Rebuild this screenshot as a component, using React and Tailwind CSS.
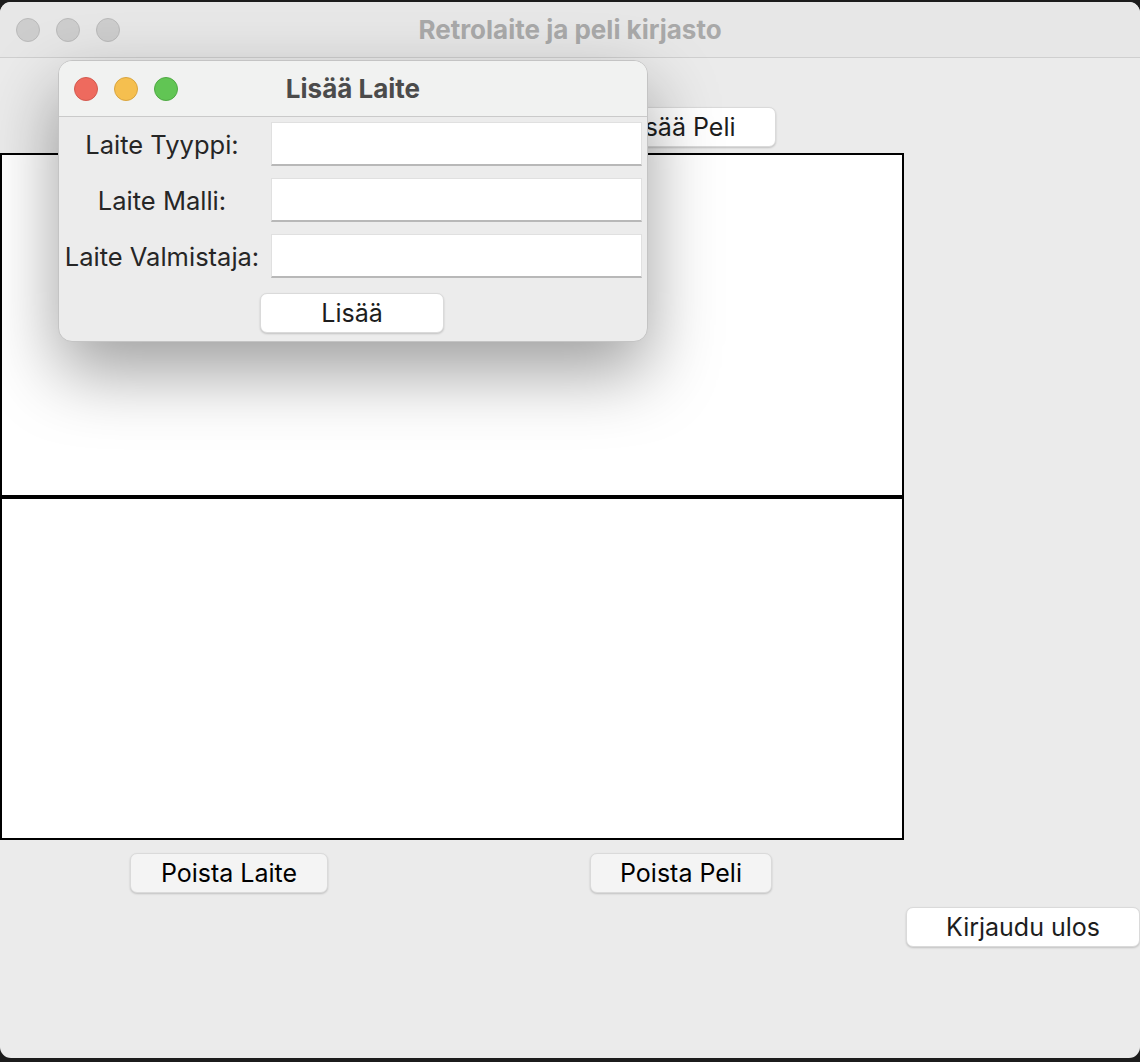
const font = { fontFamily: "Inter, 'Noto Sans', sans-serif" };

const Light = ({ color }) => (
  <span className={`block w-[24px] h-[24px] rounded-full border ${color}`} />
);

const MacButton = ({ children, className = "" }) => (
  <button
    className={`h-[40px] rounded-[7px] border border-[#dadada] shadow-[0_1px_2px_rgba(0,0,0,0.18)] text-[25px] text-[#1d1d1d] leading-none ${className}`}
  >
    {children}
  </button>
);

const Field = () => (
  <div className="h-[44px] flex-1 bg-white border border-[#e0e0e0] border-b-2 border-b-[#b8b8b8]" />
);

export default function App() {
  return (
    <div className="w-[1140px] h-[1062px] bg-[#1c1c1c] pt-[2px] overflow-hidden" style={font}>
      {/* Main window */}
      <div className="relative h-[1056px] rounded-[11px] bg-[#ebebeb] overflow-hidden flex flex-col">
        {/* Title bar */}
        <div className="h-[56px] shrink-0 bg-[#e7e7e7] border-b border-[#cfcfcf] flex items-center relative">
          <div className="flex gap-[16px] pl-[16px]">
            <Light color="bg-[#cdcdcd] border-[#bababa]" />
            <Light color="bg-[#cdcdcd] border-[#bababa]" />
            <Light color="bg-[#cdcdcd] border-[#bababa]" />
          </div>
          <div className="absolute inset-0 flex items-center justify-center text-[26px] font-bold text-[#a9a9a9]">
            Retrolaite ja peli kirjasto
          </div>
        </div>

        {/* Top buttons (first one sits under the dialog) */}
        <div className="flex mt-[49px] h-[40px]">
          <MacButton className="ml-[130px] w-[198px] bg-white" />
          <MacButton className="ml-[256px] w-[192px] bg-white">Lisää Peli</MacButton>
        </div>

        {/* Lists */}
        <div className="mt-[6px] w-[904px] flex flex-col">
          <div className="h-[344px] bg-white border-2 border-black" />
          <div className="h-[343px] bg-white border-2 border-black" />
        </div>

        {/* Bottom buttons */}
        <div className="flex mt-[13px]">
          <MacButton className="ml-[130px] w-[198px] bg-[#f4f4f4] text-black">Poista Laite</MacButton>
          <MacButton className="ml-[262px] w-[182px] bg-[#f4f4f4] text-black">Poista Peli</MacButton>
        </div>
        <div className="flex justify-end mt-[14px]">
          <MacButton className="w-[234px] bg-white">Kirjaudu ulos</MacButton>
        </div>

        {/* Dialog window */}
        <div className="absolute left-[58px] top-[58px] w-[590px] h-[282px] rounded-[14px] bg-[#ececec] border border-[#c4c4c4] shadow-[0_30px_70px_rgba(0,0,0,0.38)] overflow-hidden flex flex-col">
          <div className="h-[56px] shrink-0 bg-[#f1f2f1] border-b border-[#cacaca] relative flex items-center">
            <div className="flex gap-[16px] pl-[15px]">
              <Light color="bg-[#ee6a5e] border-[#d35a4f]" />
              <Light color="bg-[#f5bf4f] border-[#d9a53f]" />
              <Light color="bg-[#61c554] border-[#4fa944]" />
            </div>
            <div className="absolute inset-0 flex items-center justify-center text-[26px] font-bold text-[#4b4b4b]">
              Lisää Laite
            </div>
          </div>
          <div className="flex flex-col gap-[12px] pt-[5px] pr-[5px] pl-[1px]">
            {["Laite Tyyppi:", "Laite Malli:", "Laite Valmistaja:"].map((l) => (
              <div key={l} className="flex items-center gap-[7px]">
                <div className="w-[204px] pt-[3px] text-center text-[25.5px] text-[#262626] whitespace-nowrap">{l}</div>
                <Field />
              </div>
            ))}
          </div>
          <div className="flex mt-[15px]">
            <MacButton className="ml-[201px] w-[184px] bg-white">Lisää</MacButton>
          </div>
        </div>
      </div>
    </div>
  );
}
